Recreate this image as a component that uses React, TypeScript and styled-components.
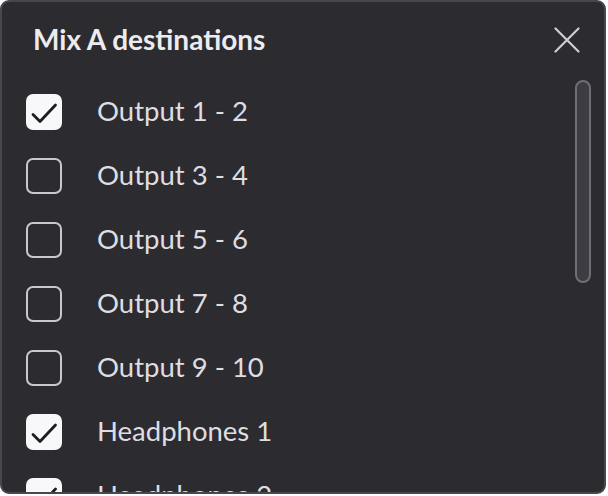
import styled, { createGlobalStyle } from "styled-components";
import { useState } from "react";

const COLOR = {
  page: "#ffffff",
  panel: "#2c2b30",
  border: "#48474d",
  text: "#dedde2",
  title: "#ececef",
  box: "#c9c8cd",
  check: "#f8f8fa",
  thumb: "#3d3c42",
  thumbBorder: "#6f6e74",
};

const GlobalStyle = createGlobalStyle`
  html, body {
    margin: 0;
    padding: 0;
    background: ${COLOR.page};
  }
  body {
    font-family: "Lato", "Noto Sans", sans-serif;
  }
`;

const DESTINATIONS = [
  { id: "out12", name: "Output 1 - 2", checked: true },
  { id: "out34", name: "Output 3 - 4", checked: false },
  { id: "out56", name: "Output 5 - 6", checked: false },
  { id: "out78", name: "Output 7 - 8", checked: false },
  { id: "out910", name: "Output 9 - 10", checked: false },
  { id: "hp1", name: "Headphones 1", checked: true },
  { id: "hp2", name: "Headphones 2", checked: true },
];

const Checkbox = ({ checked, onClick }: { checked: boolean; onClick: () => void }) => (
  <StyledBox checked={checked} onClick={onClick}>
    {checked && (
      <svg width="36" height="36" viewBox="0 0 36 36" fill="none">
        <path
          d="M7 20.5 L14 27.5 L29.5 11"
          stroke="#1d1c20"
          strokeWidth="2.8"
          strokeLinecap="round"
          strokeLinejoin="round"
        />
      </svg>
    )}
  </StyledBox>
);

const App = () => {
  const [items, setItems] = useState(DESTINATIONS);

  const toggle = (id: string) => {
    setItems((prev) =>
      prev.map((_) => (_.id === id ? { ..._, checked: !_.checked } : _))
    );
  };

  return (
    <>
      <GlobalStyle />
      <StyledPanel>
        <StyledHeader>
          <StyledTitle>Mix A destinations</StyledTitle>
          <StyledClose aria-label="Close">
            <svg width="26" height="26" viewBox="0 0 26 26" fill="none">
              <path
                d="M1.5 1.5 L24.5 24.5 M24.5 1.5 L1.5 24.5"
                stroke="#cfced3"
                strokeWidth="2.2"
                strokeLinecap="round"
              />
            </svg>
          </StyledClose>
        </StyledHeader>
        <StyledBody>
          <StyledList>
            {items.map((_) => (
              <StyledRow key={_.id}>
                <Checkbox checked={_.checked} onClick={() => toggle(_.id)} />
                <StyledLabel>{_.name}</StyledLabel>
              </StyledRow>
            ))}
          </StyledList>
          <StyledScrollTrack>
            <StyledThumb />
          </StyledScrollTrack>
        </StyledBody>
      </StyledPanel>
    </>
  );
};

export default App;

const StyledPanel = styled.div`
  width: 606px;
  height: 494px;
  box-sizing: border-box;
  background: ${COLOR.panel};
  border: 2px solid ${COLOR.border};
  border-radius: 9px;
  display: flex;
  flex-direction: column;
  overflow: hidden;
`;

const StyledHeader = styled.div`
  height: 78px;
  flex-shrink: 0;
  display: flex;
  align-items: center;
  justify-content: space-between;
  padding: 0 24px 2px 31px;
  box-sizing: border-box;
`;

const StyledTitle = styled.h1`
  margin: 0 0 2px;
  font-size: 28px;
  font-weight: 700;
  color: ${COLOR.title};
`;

const StyledClose = styled.div`
  width: 26px;
  height: 26px;
  display: flex;
  cursor: pointer;
`;

const StyledBody = styled.div`
  flex: 1;
  display: flex;
  min-height: 0;
  padding-right: 13px;
`;

const StyledList = styled.div`
  flex: 1;
  display: flex;
  flex-direction: column;
`;

const StyledRow = styled.div`
  height: 64px;
  flex-shrink: 0;
  display: flex;
  align-items: center;
  gap: 35px;
  padding-left: 24px;
`;

const StyledBox = styled.div<{ checked: boolean }>`
  width: 36px;
  height: 36px;
  box-sizing: border-box;
  border-radius: 7px;
  display: flex;
  align-items: center;
  justify-content: center;
  cursor: pointer;
  background: ${(props) => (props.checked ? COLOR.check : "transparent")};
  border: ${(props) => (props.checked ? "none" : `2px solid ${COLOR.box}`)};
`;

const StyledLabel = styled.span`
  font-size: 27.5px;
  color: ${COLOR.text};
  margin-bottom: 3px;
`;

const StyledScrollTrack = styled.div`
  width: 16px;
  display: flex;
  flex-direction: column;
`;

const StyledThumb = styled.div`
  height: 203px;
  box-sizing: border-box;
  border-radius: 8px;
  background: ${COLOR.thumb};
  border: 2px solid ${COLOR.thumbBorder};
`;
